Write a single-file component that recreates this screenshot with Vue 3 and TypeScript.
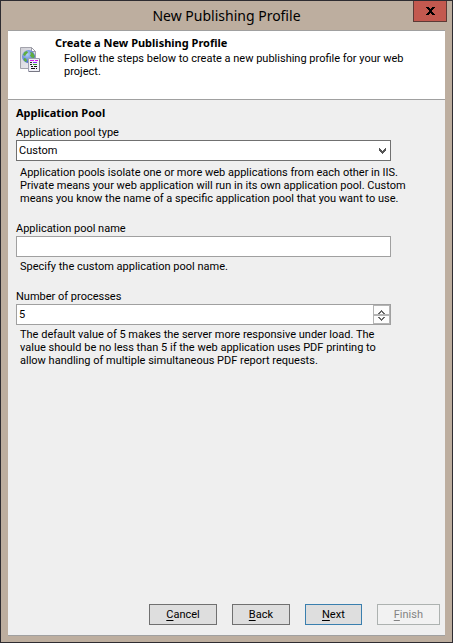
<script setup lang="ts">
import { ref } from 'vue'

const poolType = ref<string>('Custom')
const poolName = ref<string>('')
const processes = ref<string>('5')

function step(delta: number): void {
  processes.value = String(Math.max(1, Number(processes.value) + delta))
}
</script>

<template>
  <div class="window">
    <header class="titlebar">
      <h1>New Publishing Profile</h1>
      <button class="close" type="button" aria-label="Close">
        <svg width="9" height="8" viewBox="0 0 9 8" shape-rendering="crispEdges">
          <path d="M0 0h3v1h-3zM6 0h3v1h-3zM1 1h3v1h-3zM5 1h3v1h-3zM2 2h5v1h-5zM3 3h3v2h-3zM2 5h5v1h-5zM1 6h3v1h-3zM5 6h3v1h-3zM0 7h3v1h-3zM6 7h3v1h-3z" fill="#000" />
        </svg>
      </button>
    </header>

    <form class="dialog" @submit.prevent>
      <div class="banner">
        <svg class="icon" width="20" height="25" viewBox="0 0 20 25">
          <defs>
            <linearGradient id="page" x1="0" y1="0" x2="1" y2="1">
              <stop offset="0" stop-color="#cfcfd6" />
              <stop offset="1" stop-color="#f0f0f5" />
            </linearGradient>
            <radialGradient id="globe" cx="0.4" cy="0.35" r="0.7">
              <stop offset="0" stop-color="#b5d0f8" />
              <stop offset="1" stop-color="#3560c4" />
            </radialGradient>
          </defs>
          <path d="M0.500 0.500h11l4 4v17h-15z" fill="url(#page)" stroke="#a3a3ac" />
          <path d="M11.500 0.500v4h4z" fill="#fff" stroke="#9b9ba6" />
          <circle cx="8.500" cy="9.500" r="6.500" fill="url(#globe)" />
          <path d="M3 8l1.500-3 2.500-1 1 1.500-2 2-1 1.500zM4 11l2 0.500 1 2-1 1.500-2-1.500zM10 5l2.500 0.500 2 3-0.500 2.500-2.500-0.500-1.500-2 1-1.500z" fill="#5fae3c" />
          <path d="M8.500 11.500h11v13h-11z" fill="#efeff6" stroke="#a0a0b0" />
          <path d="M9 24.500h10.500v-12" fill="none" stroke="#777783" />
          <g shape-rendering="crispEdges">
            <rect x="10" y="13" width="4" height="1" fill="#d816e8" />
            <rect x="15" y="13" width="3" height="1" fill="#d816e8" />
            <rect x="10" y="15" width="2" height="1" fill="#222" />
            <rect x="13" y="15" width="4" height="1" fill="#7d2cf0" />
            <rect x="10" y="17" width="2" height="1" fill="#222" />
            <rect x="13" y="17" width="4" height="1" fill="#2f9e25" />
            <rect x="11" y="19" width="2" height="1" fill="#111" />
            <rect x="14" y="19" width="3" height="1" fill="#111" />
            <rect x="11" y="21" width="4" height="1" fill="#111" />
            <rect x="16" y="21" width="1" height="1" fill="#111" />
          </g>
        </svg>
        <div>
          <h2>Create a New Publishing Profile</h2>
          <p>Follow the steps below to create a new publishing profile for your web<br />project.</p>
        </div>
      </div>

      <main class="content">
        <h3>Application Pool</h3>

        <div class="field">
          <label for="pool-type">Application pool type</label>
          <div class="combo">
            <select id="pool-type" v-model="poolType">
              <option>Custom</option>
              <option>Private</option>
            </select>
            <svg class="arrow" width="7" height="6" viewBox="0 0 7 6" shape-rendering="crispEdges">
              <path d="M0 0h1v1h1v1h1v1h1v-1h1v-1h1v-1h1v3h-1v1h-1v1h-1v1h-1v-1h-1v-1h-1v-1h-1z" fill="#555" />
            </svg>
          </div>
          <p class="help roomy">
            Application pools isolate one or more web applications from each other in IIS.<br />
            Private means your web application will run in its own application pool. Custom<br />
            means you know the name of a specific application pool that you want to use.
          </p>
        </div>

        <div class="field">
          <label for="pool-name">Application pool name</label>
          <input id="pool-name" v-model="poolName" class="box" type="text" />
          <p class="help">Specify the custom application pool name.</p>
        </div>

        <div class="field">
          <label for="processes">Number of processes</label>
          <div class="box spinner">
            <input id="processes" v-model="processes" type="text" inputmode="numeric" />
            <div class="steps">
              <button type="button" aria-label="Increase" @click="step(1)">
                <svg width="7" height="4" viewBox="0 0 7 4" shape-rendering="crispEdges">
                  <path d="M3 0h1v1h1v1h1v1h1v1h-2v-1h-1v-1h-1v1h-1v1h-2v-1h1v-1h1v-1h1z" fill="#666" />
                </svg>
              </button>
              <button type="button" aria-label="Decrease" @click="step(-1)">
                <svg width="7" height="4" viewBox="0 0 7 4" shape-rendering="crispEdges">
                  <path d="M3 4h1v-1h1v-1h1v-1h1v-1h-2v1h-1v1h-1v-1h-1v-1h-2v1h1v1h1v1h1z" fill="#666" />
                </svg>
              </button>
            </div>
          </div>
          <p class="help">
            The default value of 5 makes the server more responsive under load. The<br />
            value should be no less than 5 if the web application uses PDF printing to<br />
            allow handling of multiple simultaneous PDF report requests.
          </p>
        </div>
      </main>

      <footer class="actions">
        <button type="button"><span class="key">C</span>ancel</button>
        <button type="button"><span class="key">B</span>ack</button>
        <button type="submit" class="primary"><span class="key">N</span>ext</button>
        <button type="button" disabled><span class="key">F</span>inish</button>
      </footer>
    </form>
  </div>
</template>

<style>
body {
  margin: 0;
}
</style>

<style scoped>
* {
  box-sizing: border-box;
}

.window {
  display: flex;
  flex-direction: column;
  min-height: 100vh;
  padding: 0 7px 6px;
  border: 1px solid #2e2c31;
  background: #bdae9f;
  color: #000;
  font-family: Roboto, "Liberation Sans", sans-serif;
  font-size: 11px;
  line-height: 13px;
}

h1,
h2,
h3,
p {
  margin: 0;
  font-size: inherit;
}

h2,
h3 {
  font-family: "Noto Sans", "Open Sans", sans-serif;
}

button,
input,
select {
  margin: 0;
  color: inherit;
  font: inherit;
}

.titlebar {
  position: relative;
  padding: 4px 0 3px;
}

h1 {
  font-family: "Noto Sans", "Open Sans", sans-serif;
  font-size: 14px;
  font-weight: 400;
  line-height: 22px;
  text-align: center;
}

.close {
  position: absolute;
  top: 0;
  right: -2px;
  display: flex;
  align-items: center;
  justify-content: center;
  width: 34px;
  height: 21px;
  padding: 0;
  border: 1px solid #5c3a36;
  border-top: 0;
  background: #c3594f;
}

.dialog {
  display: flex;
  flex: 1;
  flex-direction: column;
  border: solid #a0a0a0;
  border-width: 1px 0;
  background: #efefef;
}

.banner {
  display: flex;
  gap: 15px;
  min-height: 69px;
  padding: 5px 12px;
  border-bottom: 1px solid #a0a0a0;
  background: #fff;
}

.icon {
  flex: none;
  margin-top: 11px;
}

.banner p {
  margin-top: 3px;
  padding-left: 9px;
  white-space: nowrap;
}

.content {
  display: flex;
  flex: 1;
  flex-direction: column;
  padding: 6px 54px 16px 8px;
}

.field {
  display: flex;
  flex-direction: column;
  margin-top: 7px;
}

.field + .field {
  margin-top: 17px;
}

label {
  margin-bottom: 1px;
}

.help {
  margin-top: 3px;
  padding-left: 4px;
  white-space: nowrap;
}

.help.roomy {
  margin-top: 5px;
}

.box,
.combo {
  display: flex;
  width: 100%;
  height: 21px;
  padding: 0 2px;
  border: 1px solid #a0a0a0;
  background: #fff;
}

.combo {
  position: relative;
  padding: 0;
  border-color: #707070;
}

select {
  flex: 1;
  padding: 0 2px;
  border: 0;
  background: transparent;
  appearance: none;
}

.arrow {
  position: absolute;
  top: 7px;
  right: 4px;
  pointer-events: none;
}

.spinner {
  padding: 0;
}

.spinner input {
  flex: 1;
  min-width: 0;
  padding: 0 2px;
  border: 0;
  background: transparent;
}

.steps {
  display: flex;
  flex-direction: column;
  width: 17px;
}

.steps button {
  display: flex;
  flex: 1;
  align-items: flex-end;
  justify-content: center;
  min-height: 0;
  padding: 0;
  border: 1px solid #b4b4b4;
  background: #fdfdfd;
}

.steps button:last-child {
  align-items: center;
}

.actions {
  display: flex;
  justify-content: flex-end;
  gap: 15px;
  padding: 0 5px 10px;
}

.actions button {
  height: 21px;
  padding: 0 16px;
  border: 1px solid #707070;
  background: #dedede;
}

.actions .primary {
  border-color: #3a7fae;
}

.actions button:disabled {
  border-color: #adb2b0;
  background: #f2f2f2;
  color: #838383;
}

.key {
  text-decoration: underline;
  text-underline-offset: 2px;
}
</style>
